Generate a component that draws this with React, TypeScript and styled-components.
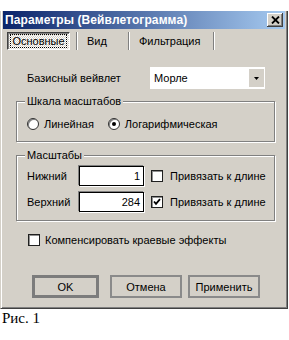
import React, { useState } from 'react';
import styled, { createGlobalStyle } from 'styled-components';

const GlobalStyle = createGlobalStyle`
  html, body {
    margin: 0;
    padding: 0;
    background: #ffffff;
  }
  body {
    font-family: "Liberation Sans", Arial, sans-serif;
    font-size: 11px;
    color: #000;
  }
`;

const Page = styled.div`
  width: 289px;
  height: 340px;
  padding-top: 11px;
  box-sizing: border-box;
`;

const Window = styled.div`
  width: 288px;
  box-sizing: border-box;
  background: #d4d0c8;
  border-left: 1px solid #d4d0c8;
  border-right: 1px solid #404040;
  border-bottom: 1px solid #404040;
  box-shadow: inset 1px 0 #ffffff, inset -1px -1px #808080;
  padding: 0 2px 10px 2px;
  display: flex;
  flex-direction: column;
`;

const TitleBar = styled.div`
  height: 18px;
  display: flex;
  align-items: center;
  justify-content: space-between;
  background: linear-gradient(to right, #0a246a, #a6caf0);
  padding: 0 2px 0 2px;
`;

const Title = styled.span`
  color: #ffffff;
  font-weight: bold;
  font-size: 12px;
  letter-spacing: 0.1px;
`;

const CloseButton = styled.button`
  width: 16px;
  height: 14px;
  padding: 0;
  background: #d4d0c8;
  border: none;
  box-shadow: inset -1px -1px #404040, inset 1px 1px #ffffff, inset -2px -2px #808080;
  display: flex;
  align-items: center;
  justify-content: center;
`;

const TabStrip = styled.div`
  height: 21px;
  display: flex;
  align-items: flex-end;
  padding-left: 4px;
`;

const Tab = styled.div<{ $w: number; $active?: boolean }>`
  width: ${p => p.$w}px;
  height: 18px;
  box-sizing: border-box;
  display: flex;
  align-items: center;
  justify-content: ${p => (p.$active ? 'center' : 'flex-start')};
  padding-left: ${p => (p.$active ? 0 : 10)}px;
  white-space: nowrap;
  ${p =>
    p.$active &&
    `
    border: 1px solid;
    border-color: #404040 #ffffff #ffffff #404040;
    box-shadow: inset 1px 1px #808080;
    background: repeating-conic-gradient(#ffffff 0 25%, #d4d0c8 0 50%) 0 0 / 2px 2px;
  `}
`;

const FocusText = styled.span`
  outline: 1px dotted #000;
  outline-offset: 0;
  padding: 0 1px;
`;

const TabSeparator = styled.div<{ $ml: number }>`
  width: 1px;
  height: 18px;
  margin-left: ${p => p.$ml}px;
  background: #808080;
  box-shadow: 1px 0 #ffffff;
`;

const WaveletRow = styled.div`
  margin-top: 17px;
  height: 22px;
  display: flex;
  align-items: center;
  padding-left: 24px;
`;

const RowLabel = styled.span<{ $w: number }>`
  width: ${p => p.$w}px;
  flex-shrink: 0;
  white-space: nowrap;
`;

const Combo = styled.div`
  width: 115px;
  height: 22px;
  box-sizing: border-box;
  background: #ffffff;
  display: flex;
  align-items: center;
  justify-content: space-between;
  padding: 2px 1px 2px 4px;
`;

const ComboButton = styled.div`
  width: 15px;
  height: 18px;
  background: #d4d0c8;
  display: flex;
  align-items: center;
  justify-content: center;
`;

const Group = styled.div<{ $h: number; $mt: number }>`
  position: relative;
  margin-top: ${p => p.$mt}px;
  margin-left: 13px;
  width: 259px;
  height: ${p => p.$h}px;
  box-sizing: border-box;
  border: 1px solid #808080;
  box-shadow: 1px 1px 0 #ffffff, inset 1px 1px 0 #ffffff;
  padding: 0 10px;
  display: flex;
  flex-direction: column;
`;

const GroupCaption = styled.span`
  position: absolute;
  top: -8px;
  left: 8px;
  padding: 0 2px;
  background: #d4d0c8;
  line-height: 14px;
`;

const RadioRow = styled.div`
  margin-top: 16px;
  display: flex;
  align-items: center;
  gap: 14px;
`;

const Choice = styled.label`
  display: flex;
  align-items: center;
  gap: 5px;
  white-space: nowrap;
`;

const RadioCircle = styled.span<{ $on?: boolean }>`
  width: 12px;
  height: 12px;
  box-sizing: border-box;
  border-radius: 50%;
  border: 1px solid #303030;
  background: #ffffff;
  box-shadow: inset 1px 1px 0 #808080;
  display: flex;
  align-items: center;
  justify-content: center;
  &::after {
    content: '';
    width: 4px;
    height: 4px;
    border-radius: 50%;
    background: ${p => (p.$on ? '#000' : 'transparent')};
  }
`;

const ScaleRow = styled.div<{ $mt: number }>`
  margin-top: ${p => p.$mt}px;
  display: flex;
  align-items: center;
`;

const Edit = styled.div`
  width: 65px;
  height: 20px;
  box-sizing: border-box;
  background: #ffffff;
  border: 1px solid #000;
  box-shadow: -1px -1px 0 #808080, 1px 1px 0 #ffffff;
  display: flex;
  align-items: center;
  justify-content: flex-end;
  padding-right: 3px;
  flex-shrink: 0;
`;

const CheckItem = styled.label<{ $ml: number; $gap: number }>`
  margin-left: ${p => p.$ml}px;
  display: flex;
  align-items: center;
  gap: ${p => p.$gap}px;
  white-space: nowrap;
  flex-shrink: 0;
`;

const CheckBox = styled.span`
  width: 12px;
  height: 12px;
  box-sizing: border-box;
  border: 1px solid #202020;
  background: #ffffff;
  box-shadow: inset 1px 1px 0 #909090;
  display: flex;
  align-items: center;
  justify-content: center;
  flex-shrink: 0;
`;

const CompensateRow = styled.div`
  margin-top: 12px;
  height: 13px;
  display: flex;
  align-items: center;
  padding-left: 25px;
`;

const ButtonRow = styled.div`
  margin-top: 29px;
  display: flex;
  padding-left: 29px;
`;

const Button = styled.button<{ $w: number; $ml: number; $default?: boolean }>`
  width: ${p => p.$w}px;
  height: 23px;
  margin-left: ${p => p.$ml}px;
  box-sizing: border-box;
  background: #d4d0c8;
  font-family: "Liberation Sans", Arial, sans-serif;
  font-size: 11px;
  color: #000;
  padding: 0;
  border: ${p => (p.$default ? '3px solid #7c7c7c' : '2px solid #8a8a8a')};
`;

const Caption = styled.div`
  font-family: "Liberation Serif", "Times New Roman", serif;
  font-size: 15px;
  padding: 1px 0 0 2px;
  line-height: 16px;
`;

const CloseIcon = () => (
  <svg width="9" height="8" viewBox="0 0 9 8">
    <path d="M1 0.5 L8 7.5 M8 0.5 L1 7.5" stroke="#000" strokeWidth="1.8" />
  </svg>
);

const ArrowDown = () => (
  <svg width="5" height="3" viewBox="0 0 5 3">
    <path d="M0 0 H5 L2.5 3 Z" fill="#000" />
  </svg>
);

const CheckMark = () => (
  <svg width="8" height="8" viewBox="0 0 8 8">
    <path d="M1 3.5 L3 5.8 L7 1.2" stroke="#000" strokeWidth="1.8" fill="none" />
  </svg>
);

export default function App() {
  const [logScale] = useState(true);
  const [bindLow] = useState(false);
  const [bindHigh] = useState(true);
  const [compensate] = useState(false);

  return (
    <>
      <GlobalStyle />
      <Page>
        <Window>
          <TitleBar>
            <Title>Параметры (Вейвлетограмма)</Title>
            <CloseButton>
              <CloseIcon />
            </CloseButton>
          </TitleBar>

          <TabStrip>
            <Tab $w={63} $active>
              <FocusText>Основные</FocusText>
            </Tab>
            <TabSeparator $ml={6} />
            <Tab $w={51}>Вид</Tab>
            <TabSeparator $ml={0} />
            <Tab $w={84}>Фильтрация</Tab>
            <TabSeparator $ml={0} />
          </TabStrip>

          <WaveletRow>
            <RowLabel $w={123}>Базисный вейвлет</RowLabel>
            <Combo>
              <span>Морле</span>
              <ComboButton>
                <ArrowDown />
              </ComboButton>
            </Combo>
          </WaveletRow>

          <Group $h={41} $mt={12}>
            <GroupCaption>Шкала масштабов</GroupCaption>
            <RadioRow>
              <Choice>
                <RadioCircle $on={!logScale} />
                Линейная
              </Choice>
              <Choice>
                <RadioCircle $on={logScale} />
                Логарифмическая
              </Choice>
            </RadioRow>
          </Group>

          <Group $h={66} $mt={13}>
            <GroupCaption>Масштабы</GroupCaption>
            <ScaleRow $mt={10}>
              <RowLabel $w={52}>Нижний</RowLabel>
              <Edit>1</Edit>
              <CheckItem $ml={7} $gap={7}>
                <CheckBox>{bindLow && <CheckMark />}</CheckBox>
                Привязать к длине
              </CheckItem>
            </ScaleRow>
            <ScaleRow $mt={6}>
              <RowLabel $w={52}>Верхний</RowLabel>
              <Edit>284</Edit>
              <CheckItem $ml={7} $gap={7}>
                <CheckBox>{bindHigh && <CheckMark />}</CheckBox>
                Привязать к длине
              </CheckItem>
            </ScaleRow>
          </Group>

          <CompensateRow>
            <CheckItem $ml={0} $gap={5}>
              <CheckBox>{compensate && <CheckMark />}</CheckBox>
              Компенсировать краевые эффекты
            </CheckItem>
          </CompensateRow>

          <ButtonRow>
            <Button $w={67} $ml={0} $default>
              OK
            </Button>
            <Button $w={72} $ml={11}>
              Отмена
            </Button>
            <Button $w={72} $ml={6}>
              Применить
            </Button>
          </ButtonRow>
        </Window>
        <Caption>Рис. 1</Caption>
      </Page>
    </>
  );
}
